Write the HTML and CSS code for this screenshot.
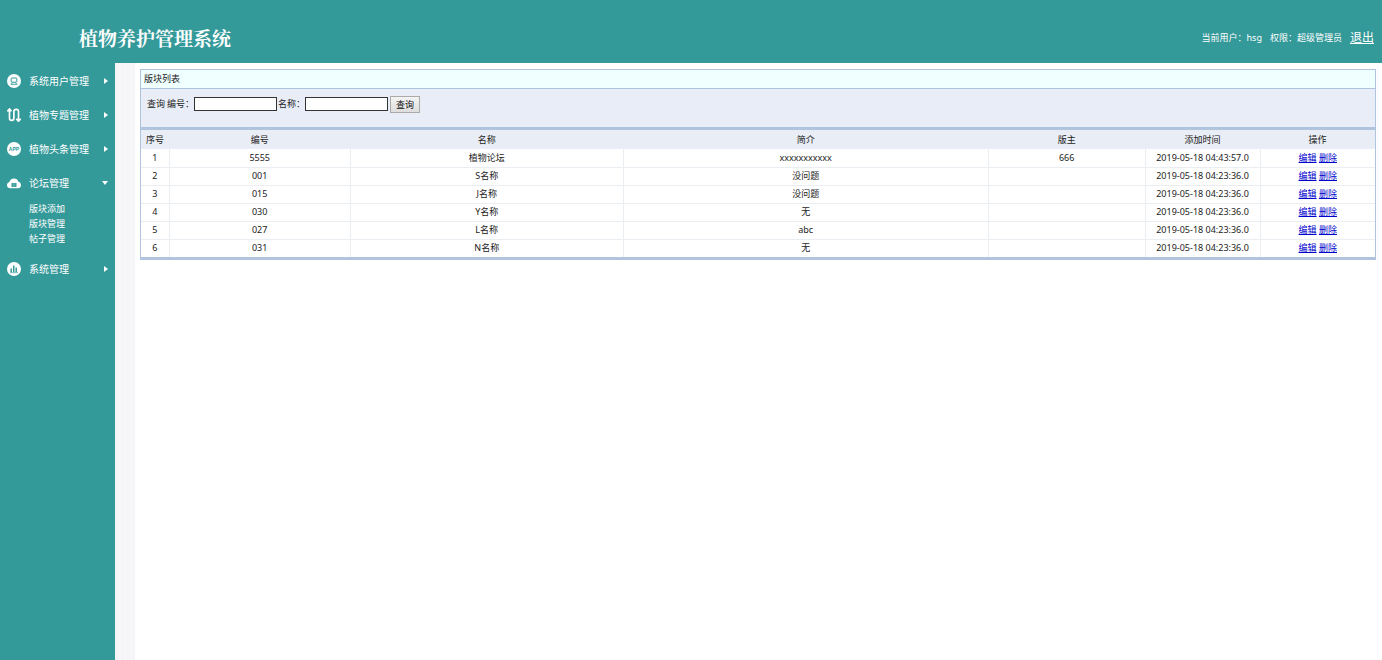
FILE: index.html
```html
<!DOCTYPE html>
<html lang="zh-CN">
<head>
<meta charset="utf-8">
<title>植物养护管理系统</title>
<link rel="stylesheet" href="styles.css">
</head>
<body>
<header class="header">
  <h1 class="brand">植物养护管理系统</h1>
  <div class="account">
    <span>当前用户：hsg</span>
    <span>权限：超级管理员</span>
    <a class="logout" href="#">退出</a>
  </div>
</header>
<div class="shell">
  <nav class="sidebar">
    <a class="nav-item" href="#">
      <svg class="nav-icon" viewBox="0 0 14 14"><circle cx="7" cy="7" r="7" fill="#fff"/><rect x="4.200" y="4" width="5.600" height="4.200" rx=".8" fill="none" stroke="#399" stroke-width="1"/><path d="M3.500 10.300h7M5.500 8.500l-1 1.500M8.500 8.500l1 1.500" fill="none" stroke="#399" stroke-width=".9"/></svg>
      <span>系统用户管理</span><i class="arrow"></i>
    </a>
    <a class="nav-item" href="#">
      <svg class="nav-icon" viewBox="0 0 14 14" fill="none" stroke="#fff" stroke-width="1.700"><path d="M2.500 1v9.200a2.200 2.200 0 0 0 4.400 0V3.600a2.300 2.300 0 0 1 4.600 0V13M.3 3.300 2.500 1l2 2.200M9.300 10.800l2.200 2.300 2.200-2.300"/></svg>
      <span>植物专题管理</span><i class="arrow"></i>
    </a>
    <a class="nav-item" href="#">
      <svg class="nav-icon" viewBox="0 0 14 14"><circle cx="7" cy="7" r="7" fill="#fff"/><text class="app-label" x="7" y="8.800" text-anchor="middle">APP</text></svg>
      <span>植物头条管理</span><i class="arrow"></i>
    </a>
    <a class="nav-item" href="#">
      <svg class="nav-icon" viewBox="0 0 14 14"><path d="M3.200 12.300A3.200 3.200 0 0 1 2.400 6 4.700 4.700 0 0 1 11.400 5.800 3.300 3.300 0 0 1 11 12.300z" fill="#fff"/><path d="M4.500 7h5v4h-5z" fill="#399"/><path d="M6.200 7v4M7.800 7v4" stroke="#9cc" stroke-width=".5"/></svg>
      <span>论坛管理</span><i class="arrow arrow-open"></i>
    </a>
    <div class="submenu">
      <a href="#">版块添加</a>
      <a href="#">版块管理</a>
      <a href="#">帖子管理</a>
    </div>
    <a class="nav-item" href="#">
      <svg class="nav-icon" viewBox="0 0 14 14"><circle cx="7" cy="7" r="7" fill="#fff"/><path d="M4.200 6.500V10M6.700 3.500V10M9.200 5.500V10" stroke="#399" stroke-width="1.500"/><path d="M3 10.700h8" stroke="#399" stroke-width=".7"/></svg>
      <span>系统管理</span><i class="arrow"></i>
    </a>
  </nav>
  <div class="gutter"></div>
  <main class="content">
    <section class="panel">
      <h2 class="panel-title">版块列表</h2>
      <form class="search">
        <span>查询</span>
        <label for="code">编号：</label><input id="code" type="text">
        <label class="name-label" for="name">名称：</label><input id="name" type="text">
        <button type="button">查询</button>
      </form>
      <table class="list">
        <colgroup><col class="c-index"><col class="c-code"><col class="c-name"><col class="c-intro"><col class="c-owner"><col class="c-time"><col class="c-action"></colgroup>
        <thead><tr><th>序号</th><th>编号</th><th>名称</th><th>简介</th><th>版主</th><th>添加时间</th><th>操作</th></tr></thead>
        <tbody>
          <tr><td>1</td><td>5555</td><td>植物论坛</td><td>xxxxxxxxxxx</td><td>666</td><td>2019-05-18 04:43:57.0</td><td><a href="#">编辑</a> <a href="#">删除</a></td></tr>
          <tr><td>2</td><td>001</td><td>S名称</td><td>没问题</td><td></td><td>2019-05-18 04:23:36.0</td><td><a href="#">编辑</a> <a href="#">删除</a></td></tr>
          <tr><td>3</td><td>015</td><td>J名称</td><td>没问题</td><td></td><td>2019-05-18 04:23:36.0</td><td><a href="#">编辑</a> <a href="#">删除</a></td></tr>
          <tr><td>4</td><td>030</td><td>Y名称</td><td>无</td><td></td><td>2019-05-18 04:23:36.0</td><td><a href="#">编辑</a> <a href="#">删除</a></td></tr>
          <tr><td>5</td><td>027</td><td>L名称</td><td>abc</td><td></td><td>2019-05-18 04:23:36.0</td><td><a href="#">编辑</a> <a href="#">删除</a></td></tr>
          <tr><td>6</td><td>031</td><td>N名称</td><td>无</td><td></td><td>2019-05-18 04:23:36.0</td><td><a href="#">编辑</a> <a href="#">删除</a></td></tr>
        </tbody>
      </table>
    </section>
  </main>
</div>
</body>
</html>
```
FILE: styles.css
```css
* { box-sizing: border-box; }

body {
  margin: 0;
  min-height: 100vh;
  display: flex;
  flex-direction: column;
  background: #fff;
  color: #222;
  font: 9px/14px "Noto Sans", "Noto Sans CJK SC", sans-serif;
}

.header {
  display: flex;
  justify-content: space-between;
  align-items: center;
  padding: 14px 8px 1px 79px;
  height: 63px;
  background: #399;
  color: #fff;
}

.brand {
  margin: 0;
  font: 700 19px/24px "Noto Serif CJK SC", "Noto Sans CJK SC", serif;
}

.account { display: flex; align-items: center; gap: 8px; }
.logout { color: #fff; font-size: 12px; line-height: 16px; }

.shell { flex: 1; display: flex; }

.sidebar {
  flex: 0 0 115px;
  padding-top: 1px;
  background: #399;
}

.nav-item {
  display: flex;
  align-items: center;
  height: 34px;
  padding: 0 7px;
  gap: 8px;
  color: #fff;
  font-size: 10px;
  text-decoration: none;
}

.nav-icon { width: 14px; height: 14px; flex: none; }
.app-label { font: bold 5px "Liberation Sans", sans-serif; fill: #399; }

.arrow {
  margin-left: auto;
  border: 3px solid transparent;
  border-left: 4px solid #fff;
  border-right: 0;
}

.arrow-open {
  border: 3px solid transparent;
  border-top: 4px solid #fff;
  border-bottom: 0;
}

.submenu { display: flex; flex-direction: column; padding: 1px 0 6px 29px; }
.submenu a { color: #fff; line-height: 15px; text-decoration: none; }

.gutter {
  flex: 0 0 20px;
  background: repeating-linear-gradient(90deg, #f3f5f7 0 3px, #f8f6f8 3px 6px);
}

.content { flex: 1; min-width: 0; padding: 6px 6px 0 5px; }
.panel { border: 1px solid #b0c4de; border-bottom: 3px solid #b0c4de; }

.panel-title {
  margin: 0;
  padding: 1px 3px;
  font-size: 9px;
  font-weight: 400;
  line-height: 16px;
  background: #f0ffff;
  border-bottom: 1px solid #b0c4de;
}

.search {
  display: flex;
  align-items: flex-start;
  height: 41px;
  padding: 7px 6px;
  line-height: 16px;
  background: #e9edf7;
  border-bottom: 3px solid #b0c4de;
}

.search span { margin-right: 2px; }
.search .name-label { margin-left: 1px; }

.search input {
  width: 83px;
  height: 14px;
  margin-top: 1px;
  padding: 0 2px;
  border: 1px solid #333;
  background: #fff;
  font: inherit;
}

.search button {
  height: 17px;
  margin-left: 2px;
  padding: 0 5px;
  border: 1px solid #aaa;
  background: linear-gradient(#f4f4f4, #ddd);
  color: #111;
  font: inherit;
  line-height: 14px;
}

.list { width: 100%; table-layout: fixed; border-collapse: collapse; text-align: center; }
.c-index { width: 28px; }
.c-code { width: 14.7%; }
.c-name { width: 22.1%; }
.c-intro { width: 29.6%; }
.c-owner { width: 12.7%; }
.c-time { width: 115px; }
.c-action { width: 115px; }
.list th, .list td { height: 18px; padding: 0; line-height: 16px; }
.list th { height: 19px; background: #e9edf5; font-weight: 400; }
.list td { border: solid #eaeef2; border-width: 0 1px 1px 0; }
.list td:last-child { border-right: 0; }
.list tr:last-child td { border-bottom: 0; }
.list a { color: #00c; }
```
